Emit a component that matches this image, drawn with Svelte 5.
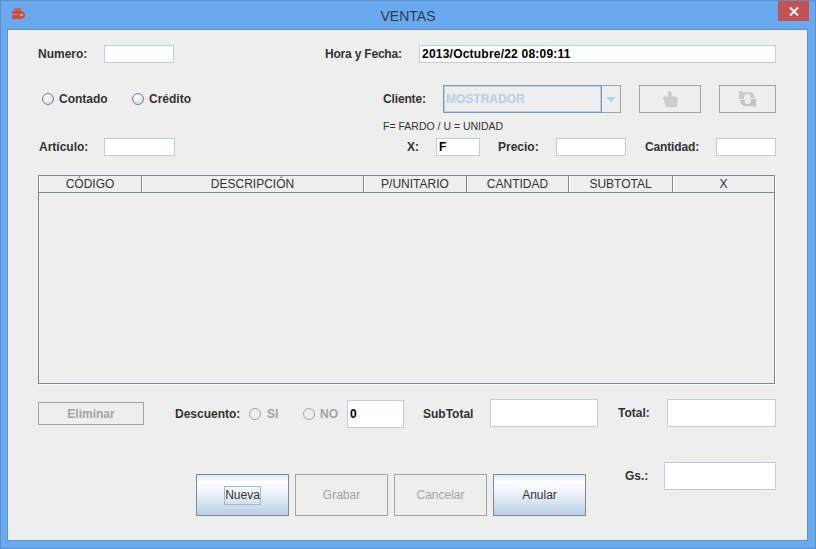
<script>
  const columns = [
    { name: "CÓDIGO", width: 103 },
    { name: "DESCRIPCIÓN", width: 222 },
    { name: "P/UNITARIO", width: 103 },
    { name: "CANTIDAD", width: 102 },
    { name: "SUBTOTAL", width: 104 },
    { name: "X", width: 101 }
  ];
</script>

<div class="window">
  <header class="titlebar">
    <svg class="app-icon" width="13" height="11" viewBox="0 0 13 11">
      <path d="M2 0h7v3H2z" fill="#b0705a" />
      <path d="M0 3h10v8H0z" fill="#d5483c" />
      <path d="M0 6h7v1H0z" fill="#8fa0b8" />
      <circle cx="9.5" cy="7" r="3.5" fill="#d5483c" />
      <circle cx="9.5" cy="7" r="1.2" fill="#f0d0c8" />
    </svg>
    <span class="title">VENTAS</span>
    <button class="close" aria-label="Cerrar">
      <svg width="10" height="9" viewBox="0 0 10 9">
        <path d="M1 .5l8 8M9 .5l-8 8" stroke="#fff" stroke-width="2" />
      </svg>
    </button>
  </header>

  <main class="body">
    <div class="row row1">
      <span class="lbl w-numero">Numero:</span>
      <input class="field w70" />
      <span class="lbl w-hora">Hora y Fecha:</span>
      <input class="field w-fecha strong wide" value="2013/Octubre/22 08:09:11" />
    </div>

    <div class="row row2">
      <label class="radio w-contado"><i></i>Contado</label>
      <label class="radio w-credito"><i></i>Crédito</label>
      <span class="lbl w-cliente">Cliente:</span>
      <div class="combo">
        <span class="combo-text">MOSTRADOR</span>
        <span class="combo-arrow"><b></b></span>
      </div>
      <button class="btn-off icon-a" aria-label="Seleccionar">
        <svg width="15" height="16" viewBox="0 0 15 16">
          <path d="M5 0h3v2h1v3l5 1 1 2-1 8H3L0 7l1-2 4 1z" fill="#c9cdd0" />
        </svg>
      </button>
      <button class="btn-off icon-b" aria-label="Actualizar">
        <svg width="17" height="16" viewBox="0 0 17 16">
          <path d="M0 0h2l2 1h8l3 2 1 4H10l2-2-2-2H7L5 6v2H0z" fill="#c9cdd0" />
          <path d="M17 16h-2l-2-1H5l-3-2-1-4h6l-2 2 2 2h3l2-2V8h5z" fill="#bec4c7" />
        </svg>
      </button>
    </div>

    <div class="hint">F= FARDO / U = UNIDAD</div>

    <div class="row row3">
      <span class="lbl w-articulo">Artículo:</span>
      <input class="field w71" />
      <span class="lbl w-x">X:</span>
      <input class="field w44 strong" value="F" />
      <span class="lbl w-precio">Precio:</span>
      <input class="field w70" />
      <span class="lbl w-cantidad">Cantidad:</span>
      <input class="field w60" />
    </div>

    <div class="table">
      <div class="thead">
        {#each columns as col}
          <div class="th" style="width: {col.width}px">{col.name}</div>
        {/each}
      </div>
    </div>

    <div class="row row4">
      <button class="btn-off eliminar">Eliminar</button>
      <span class="lbl w-descuento">Descuento:</span>
      <label class="radio off w-si"><i></i>SI</label>
      <label class="radio off w-no"><i></i>NO</label>
      <input class="field tall w57 strong" value="0" />
      <span class="lbl w-subtotal">SubTotal</span>
      <input class="field tall w108 raised" />
      <span class="lbl w-total raised">Total:</span>
      <input class="field tall w109 raised" />
    </div>

    <div class="row5">
      <div class="actions">
        <button class="btn"><span class="focus">Nueva</span></button>
        <button class="btn-off action">Grabar</button>
        <button class="btn-off action">Cancelar</button>
        <button class="btn">Anular</button>
      </div>
      <div class="gs">
        <span class="lbl w-gs">Gs.:</span>
        <input class="field tall w112" />
      </div>
    </div>
  </main>
</div>

<style>
  :global(body) {
    margin: 0;
    background: #69aaee;
  }

  .window {
    box-sizing: border-box;
    width: 816px;
    height: 549px;
    background: #69aaee;
    border: 1px solid #5a8fc8;
    font-family: "Liberation Sans", Arial, sans-serif;
    font-size: 12px;
    color: #333;
    overflow: hidden;
  }

  .titlebar {
    position: relative;
    display: flex;
    justify-content: center;
    height: 28px;
  }

  .app-icon {
    position: absolute;
    left: 11px;
    top: 7px;
  }

  .title {
    margin-top: 7px;
    font-size: 14px;
    line-height: 16px;
    color: #2f3a4c;
  }

  .close {
    position: absolute;
    right: 6px;
    top: 0;
    width: 31px;
    height: 20px;
    padding: 0;
    border: 0;
    background: #c75050;
    display: flex;
    align-items: center;
    justify-content: center;
  }

  .body {
    box-sizing: border-box;
    width: 801px;
    height: 512px;
    margin: 0 0 0 6px;
    background: #eeeeee;
    border: 1px solid #5a93cf;
    padding: 15px 0 0 30px;
  }

  .row {
    display: flex;
    align-items: center;
  }

  .row1 { height: 18px; }
  .row2 { height: 28px; margin-top: 22px; }
  .row3 { height: 18px; margin-top: 6px; }
  .row4 { height: 28px; margin-top: 16px; }

  .lbl {
    font-weight: bold;
    flex: none;
  }

  .w-numero { width: 66px; }
  .w-hora { width: 94px; margin-left: 151px; letter-spacing: -0.2px; }
  .w-articulo { width: 65px; margin-left: 1px; }
  .w-x { width: 29px; margin-left: 232px; }
  .w-precio { width: 58px; margin-left: 18px; }
  .w-cantidad { width: 71px; margin-left: 19px; letter-spacing: -0.15px; }
  .w-cliente { width: 60px; margin-left: 191px; letter-spacing: -0.15px; }
  .w-descuento { width: 74px; margin-left: 31px; }
  .w-subtotal { width: 67px; margin-left: 19px; }
  .w-total { width: 49px; margin-left: 20px; }
  .w-gs { width: 39px; }

  .raised { margin-bottom: 2px; }

  .field {
    box-sizing: border-box;
    flex: none;
    height: 18px;
    padding: 0 2px;
    border: 1px solid #b8cfe5;
    border-radius: 0;
    outline: 0;
    background: #fff;
    font-family: inherit;
    font-size: 12px;
    color: #333;
  }

  .field.tall { height: 28px; }
  .field.strong { font-weight: bold; color: #000; }
  .field.wide { letter-spacing: 0.22px; }

  .w44 { width: 44px; }
  .w57 { width: 57px; }
  .w60 { width: 60px; }
  .w70 { width: 70px; }
  .w71 { width: 71px; }
  .w108 { width: 108px; }
  .w109 { width: 109px; }
  .w112 { width: 112px; }
  .w-fecha { width: 357px; }

  .radio {
    display: flex;
    align-items: center;
    flex: none;
    font-weight: bold;
  }

  .radio i {
    box-sizing: border-box;
    width: 12px;
    height: 12px;
    margin-right: 5px;
    border: 1px solid #6f8296;
    border-radius: 50%;
    background: radial-gradient(circle at 40% 35%, #fff, #c6d6e6);
  }

  .radio.off { color: #a3a3a3; }

  .radio.off i {
    border-color: #a3a3a3;
    background: #eee;
  }

  .w-contado { width: 90px; margin-left: 4px; }
  .w-credito { width: 60px; }
  .w-si { width: 54px; }
  .w-si i { margin-right: 6px; }
  .w-no { width: 44px; }

  .combo {
    display: flex;
    width: 178px;
    height: 28px;
    flex: none;
  }

  .combo-text {
    box-sizing: border-box;
    width: 159px;
    padding-left: 2px;
    border: 1px solid #7a9ab8;
    box-shadow: inset 0 0 0 1px #b8cfe5;
    font-weight: bold;
    line-height: 26px;
    color: #b8cfe5;
  }

  .combo-arrow {
    box-sizing: border-box;
    width: 19px;
    display: flex;
    align-items: center;
    justify-content: center;
    border: 1px solid #a3a3a3;
    border-left: 0;
  }

  .combo-arrow b {
    width: 0;
    height: 0;
    border: 5px solid transparent;
    border-top: 5px solid #b8cfe5;
    border-bottom: 0;
  }

  .btn-off, .btn {
    box-sizing: border-box;
    flex: none;
    margin: 0;
    padding: 0;
    font-family: inherit;
    font-size: 12px;
    border-radius: 0;
  }

  .btn-off {
    display: flex;
    align-items: center;
    justify-content: center;
    border: 1px solid #a3a3a3;
    background: #eee;
    color: #a3a3a3;
    font-weight: bold;
  }

  .icon-a { width: 62px; height: 28px; margin-left: 18px; }
  .icon-b { width: 57px; height: 28px; margin-left: 18px; }

  .hint {
    height: 12px;
    margin: 7px 0 0 345px;
    font-size: 10.5px;
    line-height: 12px;
    color: #333;
  }

  .table {
    box-sizing: border-box;
    width: 737px;
    height: 209px;
    margin-top: 19px;
    border: 1px solid #7a8a99;
    box-shadow: 1px 1px 0 #fff;
  }

  .thead {
    display: flex;
    height: 16px;
    border-bottom: 1px solid #7a8a99;
  }

  .th {
    box-sizing: border-box;
    flex: none;
    padding-right: 1px;
    border-right: 1px solid #7a8a99;
    border-left: 1px solid #fff;
    text-align: center;
    line-height: 16px;
  }

  .th:last-child { border-right: 0; }

  .eliminar {
    width: 106px;
    height: 23px;
    align-self: flex-start;
    margin-top: 2px;
  }

  .row5 {
    display: flex;
    margin-top: 34px;
  }

  .actions {
    display: flex;
    gap: 6px;
    margin: 12px 0 0 158px;
  }

  .action {
    width: 93px;
    height: 42px;
    font-weight: normal;
  }

  .btn {
    width: 93px;
    height: 42px;
    border: 1px solid #7a8a99;
    background: linear-gradient(#dde8f3 0%, #fff 18%, #e8eff7 50%, #b8cfe5 100%);
    color: #333;
  }

  .focus {
    border: 1px solid #a3b8cc;
    padding: 1px 0 2px;
  }

  .gs {
    display: flex;
    align-items: center;
    height: 28px;
    margin-left: 39px;
  }
</style>
